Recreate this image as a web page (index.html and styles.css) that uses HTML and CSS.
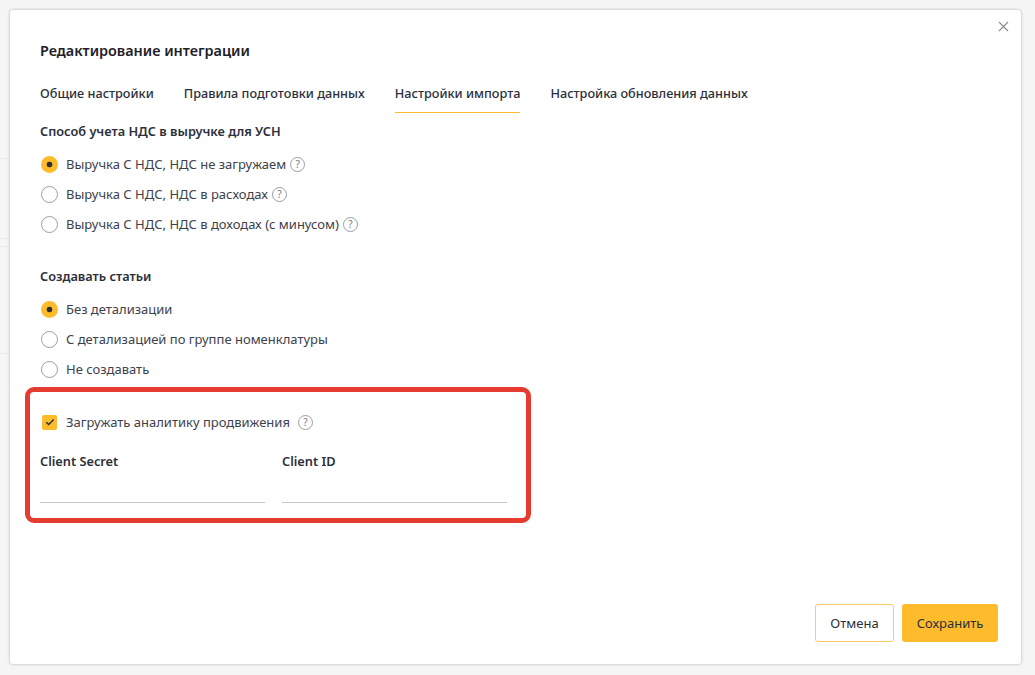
FILE: index.html
```html
<!DOCTYPE html>
<html lang="ru">
<head>
<meta charset="utf-8">
<title>Редактирование интеграции</title>
<link rel="stylesheet" href="styles.css">
</head>
<body>
<div class="modal">
  <button class="close" aria-label="Закрыть">
    <svg width="11" height="11" viewBox="0 0 11 11"><path d="M1 1l9 9M10 1l-9 9" stroke="#8a8d96" stroke-width="1.2" fill="none"/></svg>
  </button>
  <h1 class="title">Редактирование интеграции</h1>
  <nav class="tabs">
    <span class="tab">Общие настройки</span>
    <span class="tab">Правила подготовки данных</span>
    <span class="tab active">Настройки импорта</span>
    <span class="tab">Настройка обновления данных</span>
  </nav>
  <section class="group">
    <h2 class="group-title">Способ учета НДС в выручке для УСН</h2>
    <div class="options">
      <label class="option"><span class="radio on"></span>Выручка С НДС, НДС не загружаем<span class="help">?</span></label>
      <label class="option"><span class="radio"></span>Выручка С НДС, НДС в расходах<span class="help">?</span></label>
      <label class="option"><span class="radio"></span>Выручка С НДС, НДС в доходах (с минусом)<span class="help">?</span></label>
    </div>
  </section>
  <section class="group second">
    <h2 class="group-title">Создавать статьи</h2>
    <div class="options">
      <label class="option"><span class="radio on"></span>Без детализации</label>
      <label class="option"><span class="radio"></span>С детализацией по группе номенклатуры</label>
      <label class="option"><span class="radio"></span>Не создавать</label>
    </div>
  </section>
  <section class="highlight">
    <label class="option check-row">
      <span class="check"><svg width="10" height="8" viewBox="0 0 10 8"><path d="M1.2 4.2l2.5 2.3 5-5" stroke="#2b2f3a" stroke-width="1.5" fill="none"/></svg></span>
      Загружать аналитику продвижения<span class="help wide">?</span>
    </label>
    <div class="fields">
      <div class="field"><div class="field-label">Client Secret</div><div class="field-input"></div></div>
      <div class="field"><div class="field-label">Client ID</div><div class="field-input"></div></div>
    </div>
  </section>
  <footer class="footer">
    <button class="btn ghost">Отмена</button>
    <button class="btn primary">Сохранить</button>
  </footer>
</div>
</body>
</html>
```
FILE: styles.css
```css
* { box-sizing: border-box; }
html, body { height: 100%; }
body {
  margin: 0;
  padding: 10px 14px 11px 10px;
  background-color: #f5f5f5;
  background-image:
    linear-gradient(#ebebeb, #ebebeb),
    linear-gradient(#ebebeb, #ebebeb),
    linear-gradient(#ebebeb, #ebebeb),
    linear-gradient(#ebebeb, #ebebeb);
  background-size: 10px 1px;
  background-repeat: no-repeat;
  background-position: 0 158px, 0 238px, 0 246px, 0 353px;
  font-family: "Noto Sans", "Liberation Sans", sans-serif;
  color: #2b2f3a;
  overflow: hidden;
}
.modal {
  position: relative;
  display: flex;
  flex-direction: column;
  height: 654px;
  padding: 32px 23px 22px 30px;
  background: #fff;
  border-radius: 3px;
  box-shadow: 0 0 3px rgba(0, 0, 0, .3);
}
.close {
  position: absolute;
  top: 11px;
  right: 12px;
  padding: 0;
  border: 0;
  background: none;
  line-height: 0;
}
.title {
  margin: 0;
  font-size: 14.4px;
  line-height: 18px;
  font-weight: 600;
  color: #1d2027;
}
.tabs {
  display: flex;
  gap: 30px;
  margin-top: 13px;
}
.tab {
  height: 40px;
  padding-top: 10px;
  font-size: 12.7px;
  line-height: 20px;
  font-weight: 500;
  color: #2b2f3a;
}
.tab.active { border-bottom: 1px solid #febc2c; }
.group { margin-top: 9px; }
.group.second { margin-top: 33px; }
.group-title {
  margin: 0;
  font-size: 12.75px;
  line-height: 18px;
  font-weight: 600;
  color: #2b2f3a;
}
.options { margin-top: 14px; display: flex; flex-direction: column; gap: 10px; }
.option {
  display: flex;
  align-items: center;
  height: 20px;
  font-size: 13px;
  color: #3d414b;
}
.radio {
  flex: none;
  width: 17px;
  height: 17px;
  margin: 0 8px 0 1px;
  border: 1px solid #9a9da6;
  border-radius: 50%;
  background: #fff;
}
.radio.on {
  border: 0;
  background: radial-gradient(circle, #2b2f3a 0 2.6px, #febc2c 3.2px);
}
.help {
  flex: none;
  width: 15px;
  height: 15px;
  margin-left: 4px;
  border: 1px solid #9a9da6;
  border-radius: 50%;
  font-size: 10px;
  line-height: 13px;
  text-align: center;
  color: #777a84;
}
.help.wide { margin-left: 8px; }
.highlight {
  width: 506px;
  height: 136px;
  margin: 8px 0 0 -15px;
  padding: 20px 10px 0 10px;
  border: 5px solid #e53b30;
  border-radius: 9px;
}
.check-row { height: 20px; }
.check {
  flex: none;
  display: flex;
  align-items: center;
  justify-content: center;
  width: 15px;
  height: 15px;
  margin: 0 9px 0 2px;
  background: #febc2c;
  border-radius: 2px;
}
.fields {
  display: grid;
  grid-template-columns: 225px 225px;
  gap: 17px;
  margin-top: 20px;
}
.field-label {
  font-size: 12.75px;
  line-height: 18px;
  font-weight: 600;
  color: #2b2f3a;
}
.field-input {
  height: 33px;
  border-bottom: 1px solid #c4c6cb;
}
.footer {
  display: flex;
  justify-content: flex-end;
  gap: 8px;
  margin-top: auto;
}
.btn {
  height: 38px;
  padding: 0;
  border-radius: 3px;
  font-family: inherit;
  font-size: 13px;
  color: #2b2f3a;
}
.ghost { width: 79px; border: 1px solid #fdcb63; background: #fff; }
.primary { width: 96px; border: 0; background: #febc2c; }
```
